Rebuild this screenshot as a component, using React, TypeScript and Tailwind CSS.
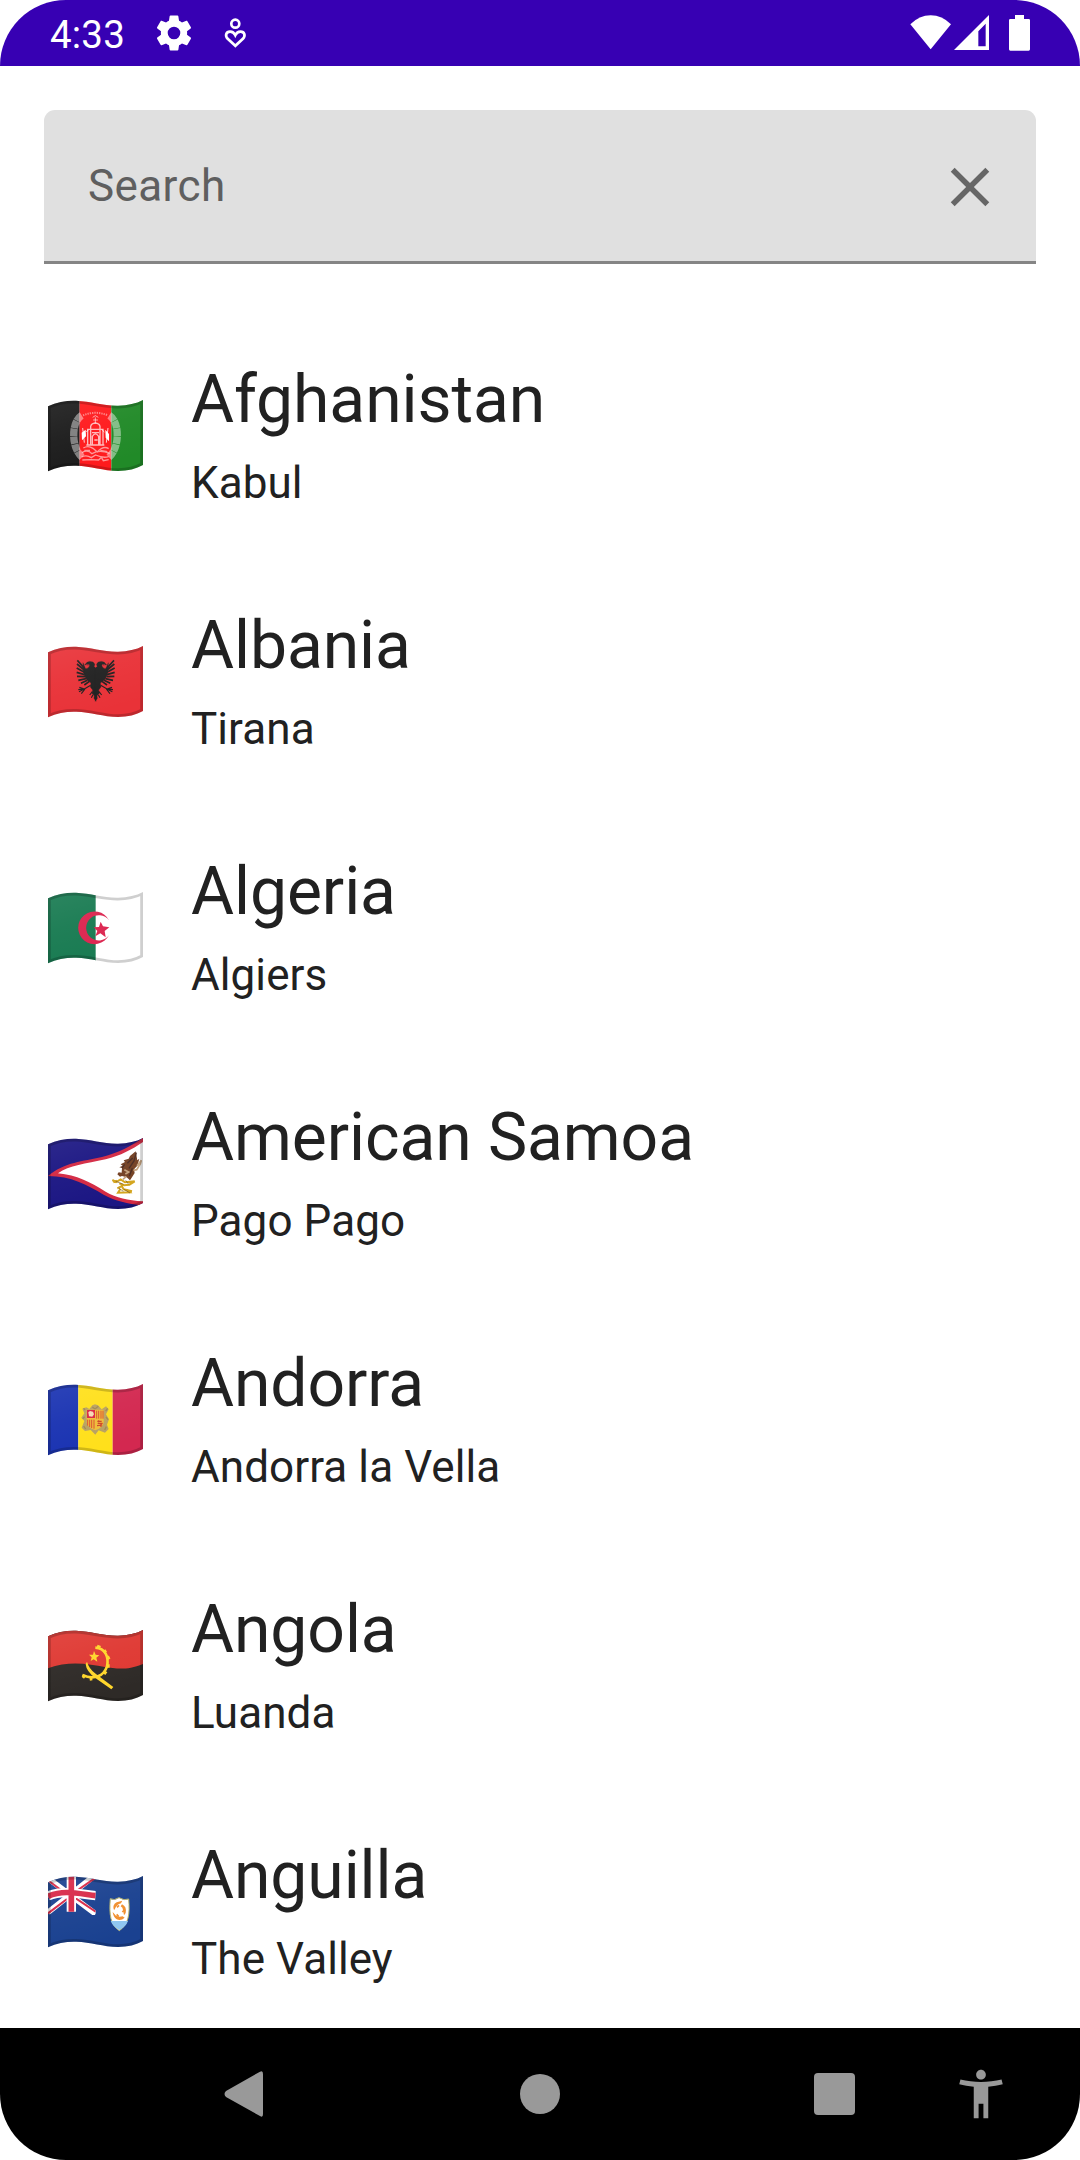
import React from "react";

const WAVE =
  "M0 6.2C9 2 19 .5 28 .8C43 1.4 55 5.9 70 5.7C80 5.5 88 3.6 95 0V65C88 68.8 80 70.9 70 71C55 71 43 66 28 65.8C19 65.5 9 67 0 71.2Z";

// Emblems are drawn on a grid three times finer than the flag itself.
function Flag({ id, offset, children }: { id: string; offset: number; children: React.ReactNode }) {
  return (
    <svg viewBox="0 0 95 72" className="h-[72px] w-[95px] shrink-0" aria-hidden="true">
      <defs>
        <clipPath id={`${id}-clip`}>
          <path d={WAVE} />
        </clipPath>
        <linearGradient id={`${id}-shade`} x1="0" y1="0" x2=".4" y2="1">
          <stop offset="0" stopColor="#fff" stopOpacity=".08" />
          <stop offset=".5" stopColor="#fff" stopOpacity=".03" />
          <stop offset="1" stopColor="#fff" stopOpacity="0" />
        </linearGradient>
      </defs>
      <g clipPath={`url(#${id}-clip)`}>
        <g transform={`scale(.33333) translate(-36 ${-offset})`}>{children}</g>
        <path d={WAVE} fill={`url(#${id}-shade)`} />
        <path d={WAVE} fill="none" stroke="#000" strokeOpacity=".19" strokeWidth="5.6" />
      </g>
    </svg>
  );
}

const flags: Record<string, React.ReactNode> = {
  af: (
    <Flag id="af" offset={60}>
      <rect x="36" y="50" width="95" height="240" fill="#1c1c1c" />
      <rect x="131" y="50" width="95" height="240" fill="#ff1a1d" />
      <rect x="226" y="50" width="97" height="240" fill="#218a28" />
      <g fill="none" stroke="#fff">
        <path d="M140 106C108 126 108 202 141 232" strokeOpacity=".44" strokeWidth="22" strokeDasharray="22 1.5" transform="translate(-3 0)" />
        <path d="M217 106C249 126 249 202 216 232" strokeOpacity=".44" strokeWidth="22" strokeDasharray="22 1.5" transform="translate(3 0)" />
        <path d="M141 106Q178 91 216 106" strokeOpacity=".45" strokeWidth="6" strokeDasharray="4 3" />
        <path d="M170 112L178 107L187 112M171 120H186M178 112V129" strokeOpacity=".6" strokeWidth="3" />
        <path d="M155 194V148H164V139Q166 130 178 129Q190 130 192 139V148H201V194M164 148V193M192 148V193M151 195H205M169 193V169Q178 154 188 169V193M164 148H192M168 158H189M175 180H185" strokeOpacity=".7" strokeWidth="4" />
        <path d="M140 144L145 188M216 144L211 188M151 156L158 149M205 156L198 149" strokeOpacity=".8" strokeWidth="3" />
        <path d="M142 204Q156 195 171 205L184 216Q202 196 218 206M138 218Q154 207 168 221Q190 208 221 220M137 231Q151 223 166 233L179 225Q201 235 218 230M139 240L163 239L188 240L196 232L202 242L218 239M145 211H162M193 211L214 215" strokeOpacity=".55" strokeWidth="4" />
      </g>
      <path d="M137 158L149 149L150 169L138 181ZM208 149L219 162L219 184L209 173Z" fill="#fff" />
    </Flag>
  ),
  al: (
    <Flag id="al" offset={48}>
      <rect x="30" y="40" width="300" height="230" fill="#e93238" />
      {["", "translate(358 0) scale(-1 1)"].map((t) => (
        <g key={t} transform={t} fill="#212121" stroke="#212121">
          <path d="M180 115Q176 111 174 109Q180 103 171 96Q160 92 153 97L146 105L158 103Q164 106 156 114Q148 120 146 110L141 98L142 119Q143 137 153 150L165 159L163 171L170 180L168 190L175 197L174 205L180 214Z" />
          <path d="M145 114L124 91M145 120L123 102M145 127L122 114M146 134L122 127M147 140L123 139M150 146L127 151M154 151L135 160M160 154L145 165" fill="none" strokeWidth="5" />
          <path d="M164 166L145 177L127 179M145 177L129 185M147 177L136 191M145 177L130 172M169 185L161 195M171 194L166 203" fill="none" strokeWidth="3.5" />
        </g>
      ))}
      <path d="M151 104L158 107M207 104L200 107" stroke="#b32630" strokeWidth="3" />
    </Flag>
  ),
  dz: (
    <Flag id="dz" offset={51}>
      <rect x="30" y="40" width="150" height="240" fill="#197b52" />
      <rect x="179" y="40" width="150" height="240" fill="#fff" />
      <path d="M219 136A49 49 0 1 0 219 181A38 38 0 1 1 219 136Z" fill="#dc2650" />
      <path d="M194 140L201 154L220 157L206 168L209 187L193 175L178 184L184 168L173 157L189 156Z" fill="#dc2650" />
    </Flag>
  ),
  as: (
    <Flag id="as" offset={54}>
      <rect x="30" y="40" width="300" height="240" fill="#1b1683" />
      <path d="M36 168C88 125 139 125 198 111C253 97 288 76 328 49V258C276 250 241 245 203 224C154 195 105 168 36 168Z" fill="#d32943" />
      <path d="M66 160C100 136 148 132 209 118C258 105 291 87 328 61V244C279 242 243 235 209 215C160 185 124 166 66 160Z" fill="#fff" />
      <path d="M299 94L304 121L310 116L304 137L294 148L296 159L287 173L282 181L272 172L258 168L252 170L244 163L248 157L257 158L258 144L250 142L260 137L254 133L267 126L263 121L278 116L282 108Z" fill="#744124" />
      <path d="M303 137L316 121L313 132L302 149L292 151M265 149L278 156L268 162M271 169L261 178" fill="none" stroke="#c4a17c" strokeWidth="5" />
      <path d="M301 98L294 123L279 145M290 114L274 130M289 145L280 168M266 133L258 144" fill="none" stroke="#492b23" strokeWidth="4" />
      <path d="M229 180L240 186L254 178L267 187L296 184L280 194L264 196L250 190M244 205L257 198L263 208L288 214M253 207L246 218L282 217L273 209M232 187L242 182" fill="none" stroke="#d4a51e" strokeWidth="6" />
      <path d="M239 184L263 193M269 181L278 193M248 204L262 214M264 208L282 219" fill="none" stroke="#765625" strokeWidth="2" />
    </Flag>
  ),
  ad: (
    <Flag id="ad" offset={42}>
      <rect x="30" y="30" width="97" height="240" fill="#1a33b2" />
      <rect x="127" y="30" width="103" height="240" fill="#ffe01b" />
      <rect x="230" y="30" width="100" height="240" fill="#d32850" />
      <path d="M139 116L151 112L160 117L169 106L177 103L186 106L197 118L210 109L218 118L210 133L219 148L213 164L218 177L207 188L188 181L178 194L164 180L147 183L137 173L145 153L136 143L145 130Z" fill="#b9a261" />
      <path d="M169 111L177 117L187 109M147 120L143 114M209 123L215 115M143 168L149 177M211 170L206 180M146 140L140 146M210 141L216 149" fill="none" stroke="#a08a52" strokeWidth="4" />
      <path d="M152 119H203V157Q202 172 178 181Q154 172 152 157Z" fill="#efbd3a" />
      <rect x="153" y="120" width="24" height="24" fill="#dc2742" />
      <path d="M157 127L162 123L171 125L174 133L169 140L159 139Z" fill="#f5d9b6" />
      <path d="M182 122V146M188 122V146M195 122V146M201 122V146M155 149V167M161 149V171M167 149V174M174 149V176" stroke="#d9502f" strokeWidth="3" />
      <path d="M184 154H197M185 160H200M183 167L199 165M188 151V157M195 161V171" stroke="#cf4429" strokeWidth="3.5" />
    </Flag>
  ),
  ao: (
    <Flag id="ao" offset={45}>
      <rect x="30" y="30" width="300" height="240" fill="#2e2a27" />
      <path d="M30 30H330V143C274 168 243 161 206 156C160 148 98 135 30 162Z" fill="#df3832" />
      <path d="M174 108L179 119L190 121L181 128L184 140L173 133L164 138L167 127L159 119L171 119Z" fill="#ffd62b" />
      <path d="M178 98C209 100 219 127 213 154C204 183 174 196 139 180" fill="none" stroke="#ffd62b" strokeWidth="8" />
      <path d="M183 94L193 98M204 106L209 113M214 124L219 133M216 148L216 158M210 169L204 177M190 184L183 190M169 191L161 192M147 187L140 182" stroke="#ffd62b" strokeWidth="10" />
      <path d="M153 140Q159 162 179 176L232 216L226 223L179 190Q151 170 149 148Z" fill="#ffd62b" />
    </Flag>
  ),
  ai: (
    <Flag id="ai" offset={48}>
      <rect x="30" y="30" width="300" height="240" fill="#1a4190" />
      <svg x="36" y="43" width="143" height="122" viewBox="36 43 143 122">
        <path d="M36 55L179 162M179 44L36 157" stroke="#fff" strokeWidth="17" />
        <path d="M36 61L96 106M115 112L179 155M179 53L117 96M93 117L36 160" stroke="#d82a48" strokeWidth="6" />
        <path d="M106 43V155M36 108C80 89 129 102 179 107" fill="none" stroke="#fff" strokeWidth="28" />
        <path d="M106 43V155M36 109C80 88 129 101 179 107" fill="none" stroke="#d82a48" strokeWidth="17" />
      </svg>
      <path d="M223 116Q234 123 249 113Q265 123 278 117C282 162 278 193 250 212C223 194 219 164 223 116Z" fill="#fff" stroke="#b6b46c" strokeWidth="3" />
      <path d="M224 183H276Q270 200 250 210Q230 199 224 183Z" fill="#8ec6f1" />
      <path d="M233 148Q229 134 242 127L259 122L255 130Q247 131 240 140L235 150ZM258 133Q273 140 269 159L264 166L261 150Q261 142 254 139ZM230 156L240 167Q248 172 260 169L266 173Q254 184 241 177Q232 171 230 156Z" fill="#f18f2e" />
      <path d="M243 142L249 136M259 156L265 150M242 163L248 170" stroke="#f18f2e" strokeWidth="5" />
    </Flag>
  ),
};

const countries = [
  { code: "af", name: "Afghanistan", capital: "Kabul" },
  { code: "al", name: "Albania", capital: "Tirana" },
  { code: "dz", name: "Algeria", capital: "Algiers" },
  { code: "as", name: "American Samoa", capital: "Pago Pago" },
  { code: "ad", name: "Andorra", capital: "Andorra la Vella" },
  { code: "ao", name: "Angola", capital: "Luanda" },
  { code: "ai", name: "Anguilla", capital: "The Valley" },
];

function StatusBar() {
  return (
    <header className="flex h-[66px] shrink-0 items-center justify-between rounded-t-[66px] bg-[#3700b3] pl-[50px] pr-[46px] text-white">
      <div className="flex h-full items-center">
        <span className="w-[103px] pt-[3px] text-[38.5px] leading-[45px] tracking-[0.2px]">4:33</span>
        <svg viewBox="0 0 24 24" className="h-[42px] w-[42px]" fill="currentColor">
          <path d="M19.43 12.98c.04-.32.07-.64.07-.98s-.03-.66-.07-.98l2.11-1.65c.19-.15.24-.42.12-.64l-2-3.46c-.12-.22-.39-.3-.61-.22l-2.49 1c-.52-.4-1.08-.73-1.69-.98l-.38-2.65C14.46 2.18 14.25 2 14 2h-4c-.25 0-.46.18-.49.42l-.38 2.65c-.61.25-1.17.59-1.69.98l-2.49-1c-.23-.09-.49 0-.61.22l-2 3.46c-.13.22-.07.49.12.64l2.11 1.65c-.04.32-.07.65-.07.98s.03.66.07.98l-2.11 1.65c-.19.15-.24.42-.12.64l2 3.46c.12.22.39.3.61.22l2.49-1c.52.4 1.08.73 1.69.98l.38 2.65c.03.24.24.42.49.42h4c.25 0 .46-.18.49-.42l.38-2.65c.61-.25 1.17-.59 1.69-.98l2.49 1c.23.09.49 0 .61-.22l2-3.46c.12-.22.07-.49-.12-.64l-2.11-1.65zM12 15.6a3.6 3.6 0 1 1 0-7.2 3.6 3.6 0 0 1 0 7.2z" />
        </svg>
        <svg viewBox="222 0 27 66" className="ml-[27px] h-[66px] w-[27px]" fill="none" stroke="white" strokeWidth="2.7">
          <circle cx="235.3" cy="23.7" r="4" />
          <path d="M235.3 45.8L227.7 38.8C224.6 35.3 226.3 31.7 230 31.6C232.7 31.5 234.3 33.2 235.3 35.2C236.3 33.2 237.9 31.5 240.6 31.6C244.3 31.7 246 35.3 242.9 38.8Z" />
        </svg>
      </div>
      <svg viewBox="90 0 372 198" className="h-[66px] w-[124px]" fill="white">
        <path d="M91 73Q118 46 152 46Q186 46 213 73L152 148Z" />
        <path fillRule="evenodd" d="M222 150L327 45V150ZM295 94V139H317V71Z" />
        <path d="M405 45H432V57H446Q450 57 450 61V148Q450 152 446 152H391Q387 152 387 148V61Q387 57 391 57H405Z" />
      </svg>
    </header>
  );
}

function SearchField() {
  return (
    <div className="mx-11 mt-11 flex h-[154px] shrink-0 items-center justify-between rounded-t-[11px] border-b-[3px] border-[#858585] bg-[#e0e0e0] pl-11 pr-[33px]">
      <span className="mt-px text-[44px] leading-[52px] tracking-[0.4px] text-[#5f5f5f]">Search</span>
      <svg viewBox="0 0 24 24" className="mt-[3px] h-[66px] w-[66px]" fill="#666">
        <path d="M19 6.41L17.59 5 12 10.59 6.41 5 5 6.41 10.59 12 5 17.59 6.41 19 12 13.41 17.59 19 19 17.59 13.41 12z" />
      </svg>
    </div>
  );
}

function NavigationBar() {
  return (
    <nav className="flex h-[132px] shrink-0 items-center rounded-b-[66px] bg-black pl-[224px] text-[#999]">
      <svg viewBox="0 0 39 46" className="h-[46px] w-[39px]" fill="currentColor">
        <path d="M36 .7Q39-1 39 3V43Q39 47 36 45L2 26Q-1 23 2 20Z" />
      </svg>
      <div className="ml-[257px] h-10 w-10 rounded-full bg-[#999]" />
      <div className="ml-[254px] h-[42px] w-[41px] rounded-[4px] bg-[#999]" />
      <svg viewBox="0 0 24 24" className="ml-[97px] h-[58px] w-[58px]" fill="currentColor">
        <path d="M20.5 6c-2.61.7-5.67 1-8.5 1s-5.89-.3-8.5-1L3 8c1.86.5 4 .83 6 1v13h2v-6h2v6h2V9c2-.17 4.14-.5 6-1l-.5-2zM12 6c1.1 0 2-.9 2-2s-.9-2-2-2-2 .9-2 2 .9 2 2 2z" />
      </svg>
    </nav>
  );
}

export default function App() {
  return (
    <div className="flex h-[2160px] w-[1080px] flex-col overflow-hidden bg-white font-['Roboto',sans-serif] text-[#212121]">
      <StatusBar />
      <SearchField />
      <main className="mt-[49px] min-h-0 flex-1 overflow-hidden">
        {countries.map((c) => (
          <div key={c.code} className="flex h-[246px] items-center gap-12 pl-12">
            {flags[c.code]}
            <div className="flex flex-col gap-[19px] pb-[3px]">
              <h2 className="text-[66px] leading-[77px] tracking-[-0.08px]">{c.name}</h2>
              <p className="text-[44px] leading-[52px] tracking-[0.08px]">{c.capital}</p>
            </div>
          </div>
        ))}
      </main>
      <NavigationBar />
    </div>
  );
}
